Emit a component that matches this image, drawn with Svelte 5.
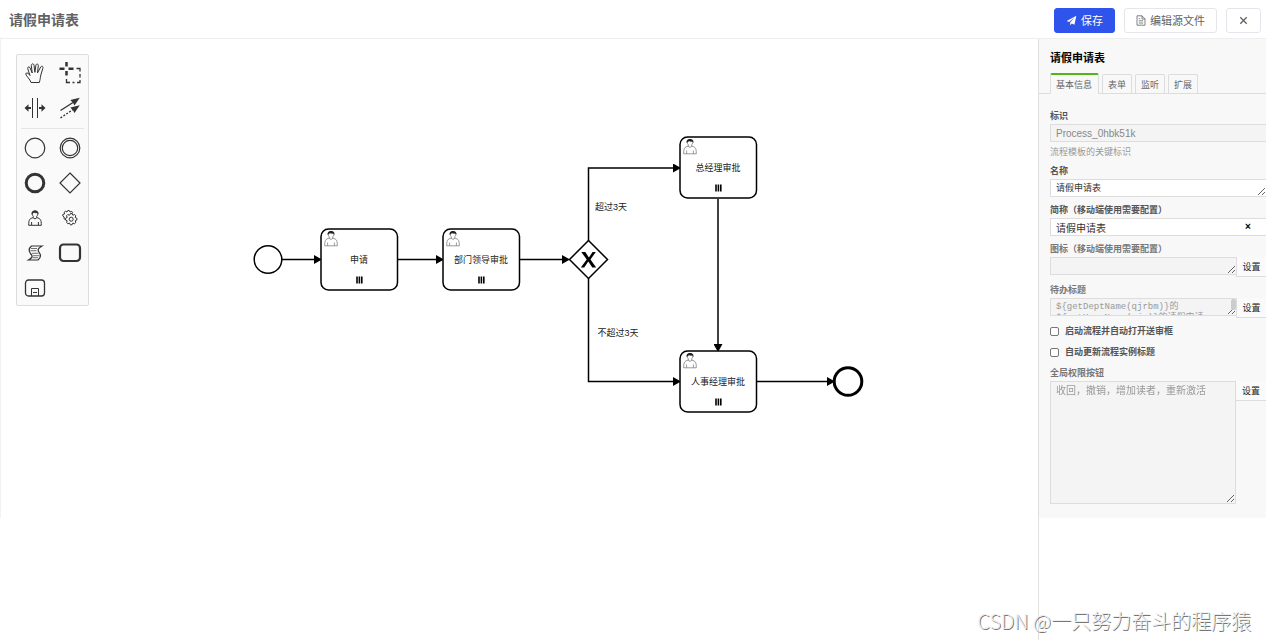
<script>
  const tabs = ['基本信息', '表单', '监听', '扩展'];
  let activeTab = $state('基本信息');
  let shortName = $state('请假申请表');

  const tasks = [
    { x: 321, y: 190, label: '申请' },
    { x: 443, y: 190, label: '部门领导审批' },
    { x: 680, y: 98, label: '总经理审批' },
    { x: 680, y: 312, label: '人事经理审批' }
  ];
  const flows = [
    'M282 220.500H314',
    'M398 220.500H436',
    'M520 220.500H562',
    'M588.500 202V129H673',
    'M588.500 239V342.500H673',
    'M718 160V305',
    'M757 342.500H827'
  ];
</script>

{#snippet person()}
  <path d="M5.200 7.600C1.500 8.700.7 9.500.7 15.300H13.300C13.300 9.500 12.500 8.700 8.800 7.600M5.300 7.500V6.300C3.500 4.500 3.800 1 7 1S10.500 4.500 8.700 6.300V7.500C8.700 9.200 5.300 9.200 5.300 7.500M3.600 15V12M10.400 15V12" />
  <path class="solid" d="M3.800 4.500C3 1.500 5 .4 7 .4S11.200 1.500 10.200 4.500L9.300 3.100C7.500 3.500 6.500 2.600 5.600 2.900Z" />
{/snippet}

<div class="page">
  <header>
    <h1>请假申请表</h1>
    <div class="actions">
      <button class="primary">
        <svg width="11" height="11" viewBox="0 0 12 12"><path fill="currentColor" d="M11.300.8.8 6.500 3.300 7.700 9.300 2.800 4.500 8.300V11.300L6.300 9.300 9.200 10.500Z" /></svg>
        保存
      </button>
      <button>
        <svg width="10" height="11" viewBox="0 0 10 11" fill="none" stroke="currentColor"><path d="M1 .8H6L9 3.800V10.200H1ZM6 .8V4H9M2.800 3.700H4.200M2.800 5.800H7.200M2.800 8H7.200" stroke-width=".8" /></svg>
        编辑源文件
      </button>
      <button class="close" aria-label="关闭">
        <svg width="9" height="9" viewBox="0 0 9 9" fill="none" stroke="currentColor" stroke-width="1.300"><path d="M1.300 1.300 7.700 7.700M7.700 1.300 1.300 7.700" /></svg>
      </button>
    </div>
  </header>

  <main>
    <section class="canvas">
      <svg class="diagram" width="880" height="400" viewBox="0 0 880 400">
        <defs>
          <marker id="arrow" viewBox="0 0 8 9" refX="0" refY="4.500" markerWidth="8" markerHeight="9" markerUnits="userSpaceOnUse" orient="auto"><path d="M0 0 8 4.500 0 9Z" /></marker>
        </defs>
        <g class="flow">
          {#each flows as d}<path {d} marker-end="url(#arrow)" />{/each}
        </g>
        <circle class="shape" cx="268" cy="220.500" r="13.800" />
        <circle class="shape end" cx="848" cy="342.500" r="13.800" />
        <path class="shape" d="M588.500 201.500 607.500 220.500 588.500 239.500 569.500 220.500Z" />
        <path d="M581.300 213H585.300L588.900 218.500 592.600 213H595.800L590.500 220.500 596.200 228.500H592.300L588.300 222.500 584.200 228.500H580.800L586.700 220.500Z" />
        {#each tasks as t}
          <g transform="translate({t.x} {t.y})">
            <rect class="shape" width="76.500" height="61" rx="7.500" />
            <g class="user" transform="translate(3 1.500)">{@render person()}</g>
            <text x="38" y="34" text-anchor="middle">{t.label}</text>
            <path class="bars" d="M36 47.500V54.500M38.400 47.500V54.500M40.800 47.500V54.500" />
          </g>
        {/each}
        <text x="611" y="171" text-anchor="middle">超过3天</text>
        <text x="618" y="297" text-anchor="middle">不超过3天</text>
      </svg>

      <div class="palette">
        <div class="tools">
          <button aria-label="抓手工具"><svg viewBox="0 0 24 24"><path d="M8 21.500C7 18 3.500 15.500 2.700 13 3 11.200 5.400 11.700 7 14.500L4.700 7.500C4.500 5.500 6.500 5.300 7.100 7L9.200 12 8.300 4.500C8.400 2.400 10.700 2.300 11 4.200L11.900 11.300 12.900 4.200C13.400 2.300 15.500 2.800 15.300 4.800L14.500 11.900 17.700 6C18.700 4.400 20.500 5.400 19.900 7.200L17.800 14C17.100 18 17.100 19 16.300 21.500Z" /></svg></button>
          <button aria-label="框选工具"><svg viewBox="0 0 24 24"><path class="thick" d="M8.500 1V5.500M8.500 10V14.500M1.500 7.800H6.500M10.500 7.800H15.500" /><path stroke-width="1.300" d="M18.500 7.500H22V10.500M22 13V16.500M22 19V21.500H19M16.500 21.500H14.500M12 21.500H8.500V18" /></svg></button>
          <button aria-label="空间工具"><svg viewBox="0 0 24 24"><path d="M9.500 2V22M14.500 2V22" /><path class="solid" d="M1.500 12 5.500 8.300V11H8V13H5.500V15.700ZM22.500 12 18.500 8.300V11H16V13H18.500V15.700Z" /></svg></button>
          <button aria-label="连线工具"><svg viewBox="0 0 24 24"><path d="M2.500 14.500 15 6.500" stroke-width="1.300" /><path stroke-dasharray="2 1.500" d="M2.500 22 15 13.500" stroke-width="1.300" /><path class="solid" d="M21.800 1.800 16.500 9.500 15 6.800 12.300 4ZM21.800 9.300 16.500 17 15 14.200 12.300 11.500Z" /></svg></button>
        </div>
        <hr />
        <div class="tools">
          <button aria-label="开始事件"><svg viewBox="0 0 24 24"><circle cx="12" cy="12" r="9.800" stroke-width="1.200" /></svg></button>
          <button aria-label="中间事件"><svg viewBox="0 0 24 24"><circle cx="12" cy="12" r="9.800" stroke-width="1.200" /><circle cx="12" cy="12" r="7.700" stroke-width="1.200" /></svg></button>
          <button aria-label="结束事件"><svg viewBox="0 0 24 24"><circle cx="12" cy="12" r="8.800" stroke-width="3" /></svg></button>
          <button aria-label="网关"><svg viewBox="0 0 24 24"><path stroke-width="1.200" d="M12 2 22 12 12 22 2 12Z" /></svg></button>
          <button aria-label="用户任务"><svg viewBox="0 0 24 24"><g transform="translate(5 4)">{@render person()}</g></svg></button>
          <button aria-label="服务任务"><svg viewBox="0 0 24 24"><path d="M12.500 7.500 14 7.600 14.800 9.200 16.600 8.600 17.800 9.700 17.200 11.500 18.900 12.300V14L17.200 14.800 17.800 16.500 16.600 17.700 14.800 17.100 14 18.800H12.300L11.500 17.100 9.700 17.700 8.600 16.500 9.200 14.800 7.500 14V12.300L9.200 11.500 8.600 9.700 9.700 8.600 11.500 9.200ZM7.500 13.500 6 12.800 6.200 11 4.800 10V8.500L6.500 8 6.200 6.200 7.300 5.200 9 6 9.800 4.500H11.200L12 6 13.800 5.400 14.600 6.500 14.500 7.500" /><circle cx="13.200" cy="13.200" r="2" /></svg></button>
          <button aria-label="脚本任务"><svg viewBox="0 0 24 24"><path stroke-width="1.200" d="M8.500 5H19C14 8 14.500 9.500 16.500 12 18.500 15 17.500 17 15 19H5.500C10 16.500 9.800 15 7.500 12.500 5.300 9.500 6 7 8.500 5Z" /><path stroke-width=".7" d="M8 7.500H14M7.500 9.700H13.500M9 12.300H15.500M10 14.700H16.500M9.500 16.700H15" /></svg></button>
          <button aria-label="任务"><svg viewBox="0 0 24 24"><rect x="2" y="3.500" width="20" height="16.500" rx="3.500" stroke-width="2.200" /></svg></button>
          <button aria-label="子流程"><svg viewBox="0 0 24 24"><rect x="2.500" y="4" width="19" height="16" rx="3" stroke-width="1.300" /><path d="M8.500 20V12.500H15.500V20M10 16.500H14" /></svg></button>
        </div>
      </div>
    </section>

    <aside>
      <div class="panel">
        <h2>请假申请表</h2>
        <nav>
          {#each tabs as tab}
            <button class:active={activeTab === tab} onclick={() => (activeTab = tab)}>{tab}</button>
          {/each}
        </nav>
        <form>
          <div class="field first">
            <label for="pid">标识</label>
            <input id="pid" value="Process_0hbk51k" disabled />
            <p>流程模板的关键标识</p>
          </div>
          <div class="field">
            <label for="name">名称</label>
            <textarea id="name" class="name">请假申请表</textarea>
          </div>
          <div class="field">
            <label for="short">简称（移动端使用需要配置）</label>
            <div class="clearable">
              <input id="short" bind:value={shortName} />
              <button type="button" aria-label="清除" onclick={() => (shortName = '')}>×</button>
            </div>
          </div>
          <div class="field dim">
            <label for="icon">图标（移动端使用需要配置）</label>
            <div class="group"><textarea id="icon" readonly></textarea><button type="button">设置</button></div>
          </div>
          <div class="field dim">
            <label for="todo">待办标题</label>
            <div class="group"><textarea id="todo" class="mono" readonly>{'${getDeptName(qjrbm)}的\n${getUserName(qjr)}的请假申请'}</textarea><span class="thumb"></span><button type="button">设置</button></div>
          </div>
          <label class="check"><input type="checkbox" />启动流程并自动打开送审框</label>
          <label class="check"><input type="checkbox" />自动更新流程实例标题</label>
          <div class="field dim">
            <label for="perm">全局权限按钮</label>
            <div class="group"><textarea id="perm" class="tall" readonly>收回，撤销，增加读者，重新激活</textarea><button type="button">设置</button></div>
          </div>
        </form>
      </div>
    </aside>
  </main>
  <div class="watermark">CSDN @一只努力奋斗的程序猿</div>
</div>

<style>
  :global(body) { background: #fff; }
  * { box-sizing: border-box; }
  .page { position: relative; display: flex; flex-direction: column; min-height: 100vh; overflow: hidden; font-family: "Liberation Sans", "Noto Sans CJK SC", sans-serif; color: #555; }
  button { font: inherit; color: inherit; cursor: pointer; margin: 0; }
  header { display: flex; align-items: center; justify-content: space-between; height: 39px; padding: 2px 5px 0 9px; border-bottom: 1px solid #eee; }
  h1 { margin: 0; font-size: 14px; line-height: 20px; color: #606266; }
  .actions { display: flex; gap: 9px; font-size: 11px; }
  .actions button { display: flex; align-items: center; justify-content: center; gap: 4px; height: 25px; padding: 0 11px; border: 1px solid #e4e6eb; border-radius: 3px; background: #fff; color: #606266; }
  .actions .primary { background: #2f54eb; border-color: #2f54eb; color: #fff; }
  .actions .close { width: 35px; padding: 0; }
  main { display: flex; flex: 1; }
  .canvas { position: relative; flex: 1; min-width: 0; padding: 15px 16px; background: linear-gradient(#f2f2f2, #f2f2f2) no-repeat 0 0 / 1px 479px; }
  .diagram { position: absolute; left: 0; top: 0; }
  .flow path { fill: none; stroke: #000; stroke-width: 1.500; }
  .shape { fill: #fff; stroke: #000; stroke-width: 1.500; }
  .end { stroke-width: 3; }
  .user { fill: none; stroke: #555; stroke-width: .6; }
  .solid { fill: #222; stroke: none; }
  .bars { stroke: #000; stroke-width: 1.600; }
  text { font-size: 9px; fill: #222; }
  .palette { position: relative; width: 73px; border: 1px solid #ddd; border-radius: 2px; background: #fafafa; }
  .tools { display: grid; grid-template-columns: 35px 35px; }
  .tools button { display: flex; align-items: center; justify-content: center; height: 35px; padding: 0; border: 0; background: none; }
  .tools svg { width: 24px; height: 24px; fill: none; stroke: #333; stroke-width: 1; }
  .tools .solid { fill: #333; stroke: none; }
  .tools .thick { stroke-width: 2.500; }
  hr { margin: 3px 4px 1px; border: 0; border-top: 1px solid #e5e5e5; }
  aside { width: 228px; border-left: 1px solid #e0e0e0; }
  .panel { background: #f8f8f8; font-size: 9px; }
  h2 { margin: 0; padding: 11px 11px 7px; font-size: 11px; line-height: 16px; color: #000; }
  nav { display: flex; align-items: flex-end; gap: 3px; padding-left: 11px; border-bottom: 1px solid #ddd; }
  nav button { height: 19px; padding: 0 5px; border: 1px solid #ddd; border-bottom: 0; border-radius: 2px 2px 0 0; background: #f8f8f8; color: #666; }
  nav .active { height: 21px; padding: 0 6px 1px 5px; margin-bottom: -1px; border-top: 2px solid #52b415; }
  form { padding: 14px 0 9px 11px; }
  .field { margin-bottom: 5px; }
  .first { margin-bottom: 3px; }
  label { display: block; line-height: 16px; font-weight: bold; color: #555; }
  .dim label { color: #777; }
  input:not([type="checkbox"]), textarea { display: block; width: 100%; height: 18px; margin: 0; padding: 1px 5px; border: 1px solid #ddd; border-right: 0; border-radius: 0; outline: 0; background: #fff; color: #333; font-family: "Liberation Sans", "Noto Sans CJK SC", sans-serif; font-size: 10px; line-height: 14px; }
  #pid { background: #f4f4f4; color: #888; }
  p { margin: 2px 0 0; line-height: 16px; color: #999; }
  textarea.name { font-size: 9px; overflow: hidden; }
  .clearable { display: grid; align-items: center; grid-template-columns: 1fr 12px 12px; }
  .clearable input { grid-area: 1 / 1 / 2 / 4; }
  .clearable button { grid-area: 1 / 2; padding: 0; border: 0; background: none; color: #000; font-size: 10px; font-weight: bold; line-height: 12px; }
  .group { position: relative; display: flex; align-items: flex-start; }
  .group textarea { flex: 1; min-width: 0; background: #f4f4f4; color: #999; }
  .group button { width: 30px; height: 20px; padding: 0; border: 1px solid #ddd; border-width: 0 0 1px 1px; background: #fafafa; color: #222; }
  textarea.mono { padding-top: 3px; font-family: "Liberation Mono", "Noto Sans CJK SC", monospace; font-size: 9px; line-height: 11px; }
  .thumb { position: absolute; top: 1px; right: 30px; width: 5px; height: 11px; border-radius: 2px; background: #ccc; }
  textarea.tall { height: 123px; padding-top: 2px; border-right: 1px solid #ddd; }
  .tall + button { border-left: 0; }
  .check { display: flex; align-items: center; gap: 6px; margin-bottom: 5px; }
  .check input { width: 9px; height: 9px; margin: 0; appearance: none; border: 1px solid #777; border-radius: 2px; background: #fff; }
  .check input:checked { background: #2f54eb; }
  .watermark { position: absolute; right: 15px; bottom: 4px; font-family: "Noto Sans CJK SC", sans-serif; font-weight: 300; font-size: 20px; line-height: 30px; color: #eee; text-shadow: 1px 1px 0 #777; pointer-events: none; }
</style>
